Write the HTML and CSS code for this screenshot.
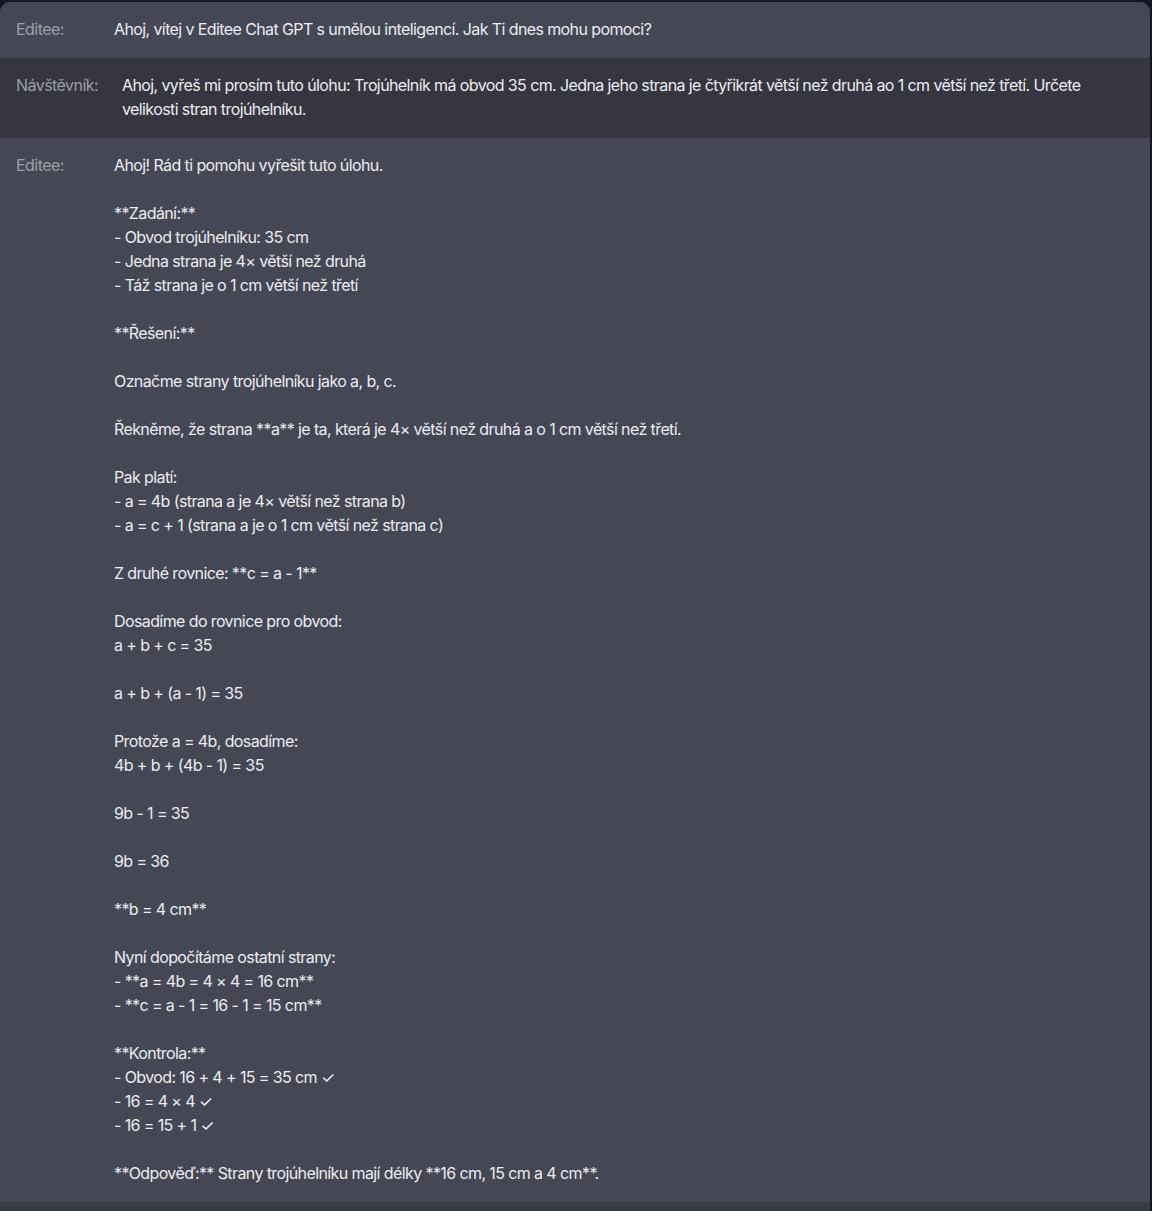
FILE: index.html
```html
<!DOCTYPE html>
<html lang="cs">
<head>
    <meta charset="UTF-8">
    <meta name="viewport" content="width=device-width, initial-scale=1.0">
    <title>Editee Chat GPT</title>
    <link rel="stylesheet" href="styles.css">
</head>
<body>
    <div class="chat">
        <div class="msg bot">
            <div class="who">Editee:</div>
            <div class="text">Ahoj, vítej v Editee Chat GPT s umělou inteligencí. Jak Ti dnes mohu pomoci?</div>
        </div>
        <div class="msg user">
            <div class="who">Návštěvník:</div>
            <div class="text">Ahoj, vyřeš mi prosím tuto úlohu: Trojúhelník má obvod 35 cm. Jedna jeho strana je čtyřikrát větší než druhá ao 1 cm větší než třetí. Určete velikosti stran trojúhelníku.</div>
        </div>
        <div class="msg bot">
            <div class="who">Editee:</div>
            <div class="text">Ahoj! Rád ti pomohu vyřešit tuto úlohu.

**Zadání:**
- Obvod trojúhelníku: 35 cm
- Jedna strana je 4× větší než druhá
- Táž strana je o 1 cm větší než třetí

**Řešení:**

Označme strany trojúhelníku jako a, b, c.

Řekněme, že strana **a** je ta, která je 4× větší než druhá a o 1 cm větší než třetí.

Pak platí:
- a = 4b (strana a je 4× větší než strana b)
- a = c + 1 (strana a je o 1 cm větší než strana c)

Z druhé rovnice: **c = a - 1**

Dosadíme do rovnice pro obvod:
a + b + c = 35

a + b + (a - 1) = 35

Protože a = 4b, dosadíme:
4b + b + (4b - 1) = 35

9b - 1 = 35

9b = 36

**b = 4 cm**

Nyní dopočítáme ostatní strany:
- **a = 4b = 4 × 4 = 16 cm**
- **c = a - 1 = 16 - 1 = 15 cm**

**Kontrola:**
- Obvod: 16 + 4 + 15 = 35 cm ✓
- 16 = 4 × 4 ✓
- 16 = 15 + 1 ✓

**Odpověď:** Strany trojúhelníku mají délky **16 cm, 15 cm a 4 cm**.</div>
        </div>
        <div class="footer"></div>
    </div>
</body>
</html>
```

FILE: styles.css
```css
body {
    margin: 0;
    background-color: #141722;
    font-family: "Inter", "DejaVu Sans", sans-serif;
}
.chat {
    margin: 2px 2px 0 0;
    background-color: #454754;
    border-radius: 10px 10px 0 0;
    overflow: hidden;
}
.msg {
    display: flex;
    gap: 24px;
    padding: 15px 16px 17px 16px;
    font-size: 16px;
    line-height: 24px;
}
.bot {
    background-color: #454754;
}
.user {
    background-color: #35363f;
}
.who {
    min-width: 74px;
    color: #9c9ea8;
    letter-spacing: -0.55px;
}
.text {
    flex: 1;
    color: #ececf1;
    white-space: pre-wrap;
    letter-spacing: -0.6px;
}
.footer {
    height: 9px;
    background-color: #383a46;
}
```
